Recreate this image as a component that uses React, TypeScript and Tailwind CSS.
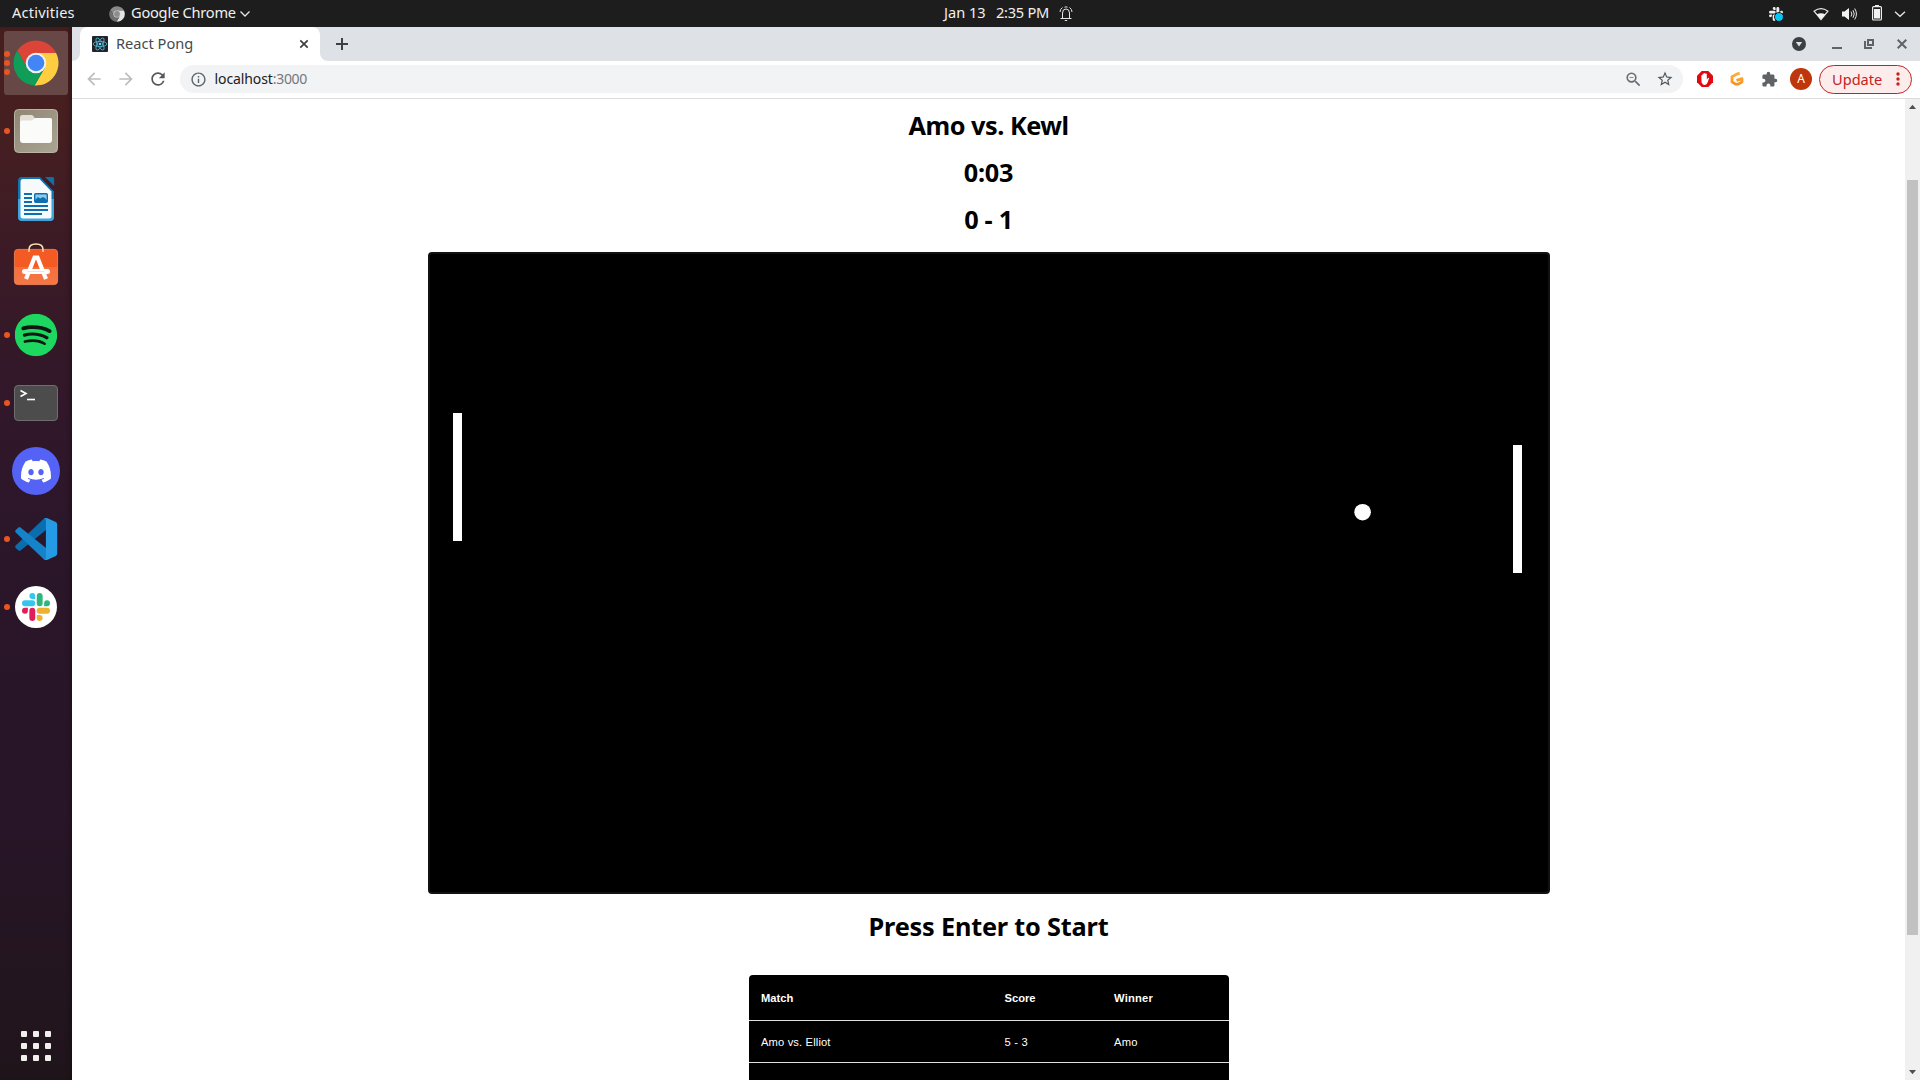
import type { ReactNode } from "react";
import { SiSpotify, SiDiscord } from "react-icons/si";
import {
  MdArrowBack,
  MdArrowForward,
  MdRefresh,
  MdInfoOutline,
  MdZoomOut,
  MdStarBorder,
  MdExtension,
} from "react-icons/md";

function ChromeLogo({ grey = false, className }: { grey?: boolean; className: string }) {
  const c = grey ? ["#8a8a8a", "#e4e4e4", "#6f6f6f", "#d6d6d6", "#8d8d8d"] : ["#db4437", "#ffcd40", "#0f9d58", "#f1f1f1", "#4285f4"];
  return (
    <svg viewBox="13 11 46 46" className={className}>
      <path d="M17.3 21.6A22.5 22.5 0 0 1 56.1 24H36L27.3 39Z" fill={c[0]} />
      <path d="M56.1 24A22.5 22.5 0 0 1 34.6 56.5L44.7 39L36 24Z" fill={c[1]} />
      <path d="M34.6 56.5A22.5 22.5 0 0 1 17.3 21.6L27.3 39H44.7Z" fill={c[2]} />
      <circle cx="36" cy="34" r="10.3" fill={c[3]} />
      <circle cx="36" cy="34" r="8.3" fill={c[4]} />
    </svg>
  );
}

const slackPaths = [
  "M5.042 15.165a2.528 2.528 0 0 1-2.52 2.523A2.528 2.528 0 0 1 0 15.165a2.527 2.527 0 0 1 2.522-2.52h2.52v2.52zM6.313 15.165a2.527 2.527 0 0 1 2.521-2.52 2.527 2.527 0 0 1 2.521 2.52v6.313A2.528 2.528 0 0 1 8.834 24a2.528 2.528 0 0 1-2.521-2.522v-6.313z",
  "M8.834 5.042a2.528 2.528 0 0 1-2.521-2.52A2.528 2.528 0 0 1 8.834 0a2.528 2.528 0 0 1 2.521 2.522v2.52H8.834zM8.834 6.313a2.528 2.528 0 0 1 2.521 2.521 2.528 2.528 0 0 1-2.521 2.521H2.522A2.528 2.528 0 0 1 0 8.834a2.528 2.528 0 0 1 2.522-2.521h6.312z",
  "M18.956 8.834a2.528 2.528 0 0 1 2.522-2.521A2.528 2.528 0 0 1 24 8.834a2.528 2.528 0 0 1-2.522 2.521h-2.522V8.834zM17.688 8.834a2.528 2.528 0 0 1-2.523 2.521 2.527 2.527 0 0 1-2.52-2.521V2.522A2.527 2.527 0 0 1 15.165 0a2.528 2.528 0 0 1 2.523 2.522v6.312z",
  "M15.165 18.956a2.528 2.528 0 0 1 2.523 2.522A2.528 2.528 0 0 1 15.165 24a2.527 2.527 0 0 1-2.52-2.522v-2.522h2.52zM15.165 17.688a2.527 2.527 0 0 1-2.52-2.523 2.526 2.526 0 0 1 2.52-2.52h6.313A2.527 2.527 0 0 1 24 15.165a2.528 2.528 0 0 1-2.522 2.523h-6.313z",
];

function SlackLogo({ colors, className }: { colors: string[]; className: string }) {
  return (
    <svg viewBox="0 0 24 24" className={className}>
      {slackPaths.map((d, i) => (
        <path key={d} d={d} fill={colors[i]} />
      ))}
    </svg>
  );
}

function FilesIcon() {
  return (
    <svg viewBox="0 0 72 68" className="h-[68px] w-[72px]">
      <defs>
        <linearGradient id="files" x1="0" y1="0" x2="1" y2="1">
          <stop offset="0" stopColor="#8f8672" />
          <stop offset="1" stopColor="#aaa594" />
        </linearGradient>
      </defs>
      <rect x="14.500" y="12.500" width="43" height="43" rx="4" fill="url(#files)" stroke="#b9b4a4" />
      <path d="M20 22.500q0-2.500 2.500-2.500h9q1.500 0 2.300 1.500l.9 1.800H50q2 0 2 2V40H20Z" fill="#e3dfd6" transform="translate(0 -2)" />
      <path d="M20 25q0-1.500 1.500-1.500H31q1.500 0 2.300-1l1-1Q35 21 36.500 21H50q2 0 2 2V43q0 3-3 3H23q-3 0-3-3Z" fill="#fbfbfa" />
    </svg>
  );
}

function WriterIcon() {
  return (
    <svg viewBox="0 0 72 68" className="h-[68px] w-[72px]">
      <path d="M22 12H40L54 26.500V52q0 4-4 4H22q-4 0-4-4V16q0-4 4-4Z" fill="#0e74b0" />
      <path d="M18 34H54V52q0 4-4 4H22q-4 0-4-4Z" fill="#3fa4da" />
      <path d="M23 14H39.500L51.500 26.500V51q0 2.500-2.500 2.500H23q-2.500 0-2.500-2.500V16.500Q20.500 14 23 14Z" fill="#f7fafc" />
      <path d="M45 12H52.500q1.700 0 1.700 1.700V21Z" fill="#0e70aa" />
      <g fill="#0b6fb0">
        <rect x="24" y="28" width="8" height="2" />
        <rect x="24" y="32" width="8" height="2" />
        <rect x="24" y="36" width="8" height="2" />
        <rect x="24" y="40" width="24" height="2" />
        <rect x="24" y="44" width="24" height="2" />
        <rect x="24" y="48" width="18" height="2" />
      </g>
      <rect x="34.700" y="28.700" width="12.600" height="8.600" rx="1" fill="#8dcbec" stroke="#0b6fb0" strokeWidth="1.400" />
      <path d="M35 37V35l3-3 2 1.500 3-1.500 2 1 2 2.500V37Z" fill="#0b6fb0" />
    </svg>
  );
}

function SoftwareIcon() {
  return (
    <svg viewBox="0 0 72 68" className="h-[68px] w-[72px]">
      <defs>
        <linearGradient id="soft" x1="0" y1="0" x2="0" y2="1">
          <stop offset="0.5" stopColor="#f35a24" />
          <stop offset="0.51" stopColor="#f56f3c" />
          <stop offset="1" stopColor="#f47845" />
        </linearGradient>
      </defs>
      <rect x="14.400" y="16.400" width="43.200" height="35.200" rx="3.500" fill="url(#soft)" stroke="#f58a5b" strokeWidth="0.800" />
      <path d="M29 19V16.500C29 12.500 32 11 36 11s7 1.500 7 5.500V19" fill="none" stroke="#fbe3b0" strokeWidth="1.500" />
      <path d="M26 46L34.500 24.500h3L46 46" fill="none" stroke="#fff" strokeWidth="4.200" />
      <rect x="22" y="36" width="28" height="5" rx="2.500" fill="#fff" />
      <path d="M27.500 38.500h17" stroke="#fbd3c2" strokeWidth="0.700" />
    </svg>
  );
}

function TerminalIcon() {
  return (
    <svg viewBox="0 0 72 68" className="h-[68px] w-[72px]">
      <rect x="14.500" y="16.500" width="43" height="35" rx="3.500" fill="#4c4c4c" stroke="#6e6e6e" />
      <path d="M20.500 21.500L26 24.500L20.500 27.500" fill="none" stroke="#fff" strokeWidth="1.600" />
      <path d="M27 30.500h8" stroke="#fff" strokeWidth="1.600" />
    </svg>
  );
}

function CodeIcon() {
  return (
    <svg viewBox="0 0 72 68" className="h-[68px] w-[72px]">
      <path d="M46 13V25L20.500 45.500q-1 .8-2 0L15.700 43q-1.200-1.200 0-2.400L43.500 14Q44.500 13 46 13Z" fill="#0b6dad" />
      <path d="M46 55V43L20.500 22.500q-1-.8-2 0L15.700 25q-1.200 1.200 0 2.400L43.500 54Q44.500 55 46 55Z" fill="#1583c9" />
      <path d="M43.500 14Q45 12.500 47.500 13.300L55.800 17q1.400.7 1.400 2.200V48.800q0 1.500-1.400 2.200L47.500 54.800Q45 55.500 43.500 54q2.300 1.300 2.400-1.700V15.700Q45.800 12.700 43.500 14Z" fill="#269be5" />
    </svg>
  );
}

const dockItems: { name: string; dots: number; icon: ReactNode }[] = [
  {
    name: "chrome",
    dots: 3,
    icon: (
      <span className="flex h-16 w-16 items-center justify-center rounded-[3px] bg-[#684846]">
        <ChromeLogo className="h-[46px] w-[46px]" />
      </span>
    ),
  },
  { name: "files", dots: 1, icon: <FilesIcon /> },
  { name: "writer", dots: 0, icon: <WriterIcon /> },
  { name: "software", dots: 0, icon: <SoftwareIcon /> },
  {
    name: "spotify",
    dots: 1,
    icon: (
      <span className="rounded-full bg-[#101712] text-[42px] text-[#1ed760]">
        <SiSpotify className="scale-[1.01]" />
      </span>
    ),
  },
  { name: "terminal", dots: 1, icon: <TerminalIcon /> },
  {
    name: "discord",
    dots: 0,
    icon: (
      <span className="flex h-12 w-12 items-center justify-center rounded-full bg-[#5562f6] text-[30px] text-white">
        <SiDiscord />
      </span>
    ),
  },
  { name: "code", dots: 1, icon: <CodeIcon /> },
  {
    name: "slack",
    dots: 1,
    icon: (
      <span className="flex h-[42px] w-[42px] items-center justify-center rounded-full bg-white">
        <SlackLogo colors={["#e01e5a", "#36c5f0", "#2eb67d", "#ecb22e"]} className="h-7 w-7" />
      </span>
    ),
  },
];

function Dock() {
  return (
    <aside className="flex w-[72px] shrink-0 flex-col justify-between bg-[linear-gradient(to_bottom,#451e1e_0%,#471f20_8%,#3d1b25_20%,#331829_32%,#2b1629_50%,#281528_75%,#22151e_94%,#20141b_100%)] pt-0.5 pb-[19px] shadow-[inset_-4px_0_5px_-3px_rgba(0,0,0,0.45)]">
      <div className="flex flex-col">
        {dockItems.map((item) => (
          <div key={item.name} className="relative flex h-[68px] items-center justify-center">
            <div className="absolute inset-y-0 left-1 z-10 flex flex-col items-center justify-center gap-[3px]">
              {Array.from({ length: item.dots }, (_, i) => (
                <span key={i} className="h-1.5 w-1.5 rounded-full bg-[#e95420]" />
              ))}
            </div>
            {item.icon}
          </div>
        ))}
      </div>
      <div className="ml-[21px] grid w-[30px] grid-cols-3 gap-1.5">
        {Array.from({ length: 9 }, (_, i) => (
          <span key={i} className="h-1.5 w-1.5 rounded-[1px] bg-[#f0efeb]" />
        ))}
      </div>
    </aside>
  );
}

function TopBar() {
  return (
    <header className="flex h-[27px] shrink-0 items-center bg-[#1d1d1d] text-[14.6px] leading-[25px] whitespace-nowrap text-[#f0f0f0]">
      <span className="mb-0.5 ml-3 w-[97px] tracking-[0.2px]">Activities</span>
      <ChromeLogo grey className="h-4 w-4" />
      <span className="mb-0.5 ml-1.5 w-[108px] tracking-[-0.22px]">Google Chrome</span>
      <svg viewBox="0 0 12 12" className="h-3 w-3" fill="none" stroke="#e6e6e6" strokeWidth="1.300">
        <path d="M1.500 3.500L6 8L10.500 3.500" />
      </svg>
      <span className="mb-0.5 ml-[693px] w-[52px]">Jan 13</span>
      <span className="mb-0.5 w-[63px] tracking-[-0.25px]">2:35 PM</span>
      <svg viewBox="0 0 14 16" className="h-4 w-3.5" fill="none" stroke="#e6e6e6" strokeWidth="1">
        <path d="M2.500 12.500h9M3.500 12.500V7Q3.500 3 7 3t3.500 4v5.500M1.500 12.500h1.500M11 12.500h1.500M5.800 14.500h2.400" />
        <path d="M3.500 1.500Q1 3 1 6M10.500 1.500Q13 3 13 6M5.500 1.200q1.500-.7 3 0" />
      </svg>
      <div className="relative ml-[696px] h-3.5 w-3.5">
        <SlackLogo colors={["#eee", "#eee", "#eee", "#eee"]} className="h-3.5 w-3.5" />
        <span className="absolute top-[6px] left-[6px] h-2 w-2 rounded-full bg-[#00c8f8] outline outline-[#1d1d1d]" />
      </div>
      <svg viewBox="0 0 16 14" className="ml-[30px] h-3.5 w-4">
        <path d="M1 4.200Q8-1 15 4.200L8 12.500Z" fill="none" stroke="#e8e8e8" strokeWidth="1.200" />
        <path d="M3.800 7.300Q8 5 12.200 7.300L8 12.500Z" fill="#f2f2f2" />
      </svg>
      <svg viewBox="0 0 16 14" className="ml-[13px] h-3.5 w-4" fill="none" stroke="#e8e8e8">
        <path d="M0 4.500H2.500L7 1V13L2.500 9.500H0Z" fill="#f2f2f2" stroke="none" />
        <path d="M9 4.500Q10.800 7 9 9.500M11 3.200Q13.500 7 11 10.800M12.700 1.500Q16.200 7 12.700 12.500" strokeWidth="1" />
      </svg>
      <svg viewBox="0 0 10 16" className="mb-0.5 ml-[14px] h-4 w-2.5">
        <rect x="3" y="0" width="4" height="2" fill="#eee" />
        <rect x="0.600" y="1.600" width="8.800" height="13.400" rx="1" fill="none" stroke="#eee" strokeWidth="1.200" />
        <rect x="2" y="4" width="6" height="9.500" fill="#f2f2f2" />
      </svg>
      <svg viewBox="0 0 12 12" className="ml-3 h-3 w-3" fill="none" stroke="#e6e6e6" strokeWidth="1.300">
        <path d="M1 3.800L6 8.300L11 3.800" />
      </svg>
    </header>
  );
}

function TabStrip() {
  return (
    <div className="flex h-[34px] items-end bg-[#dee1e6]">
      <svg viewBox="0 0 8 8" className="h-2 w-2">
        <path d="M8 0A8 8 0 0 1 0 8H8Z" fill="#fff" />
      </svg>
      <div className="flex h-[34px] w-60 items-center rounded-t-lg bg-white pl-3">
        <svg viewBox="0 0 16 16" className="h-4 w-4" fill="none" stroke="#55b9d6" strokeWidth="0.800">
          <rect width="16" height="16" rx="1" fill="#20232a" stroke="none" />
          <ellipse cx="8" cy="8" rx="6.800" ry="2.600" />
          <ellipse cx="8" cy="8" rx="6.800" ry="2.600" transform="rotate(60 8 8)" />
          <ellipse cx="8" cy="8" rx="6.800" ry="2.600" transform="rotate(120 8 8)" />
          <circle cx="8" cy="8" r="1.300" fill="#61dafb" stroke="none" />
        </svg>
        <span className="mb-0.5 ml-2 w-[181px] text-[14.6px] leading-5 text-[#45494d]">React Pong</span>
        <svg viewBox="0 0 14 14" className="h-3.5 w-3.5" stroke="#3c4043" strokeWidth="1.700">
          <path d="M3.300 3.300L10.700 10.700M10.700 3.300L3.300 10.700" />
        </svg>
      </div>
      <svg viewBox="0 0 8 8" className="h-2 w-2">
        <path d="M0 0A8 8 0 0 0 8 8H0Z" fill="#fff" />
      </svg>
      <div className="flex h-full flex-1 items-center">
        <svg viewBox="0 0 12 12" className="ml-2 h-3 w-3" stroke="#3c4043" strokeWidth="2">
          <path d="M6 0V12M0 6H12" />
        </svg>
        <svg viewBox="0 0 14 14" className="ml-auto h-3.5 w-3.5">
          <circle cx="7" cy="7" r="7" fill="#3c4043" />
          <path d="M3.800 5H10.200L7 9.500Z" fill="#dee1e6" />
        </svg>
        <svg viewBox="0 0 10 14" className="ml-[26px] h-3.5 w-2.5">
          <rect y="10" width="10" height="2" fill="#5f6368" />
        </svg>
        <svg viewBox="0 0 10 10" className="ml-[22px] h-2.5 w-2.5" fill="none" stroke="#5f6368">
          <path d="M4 1H9V6H4Z" strokeWidth="2" />
          <path d="M1 2V9H8" strokeWidth="2" />
        </svg>
        <svg viewBox="0 0 10 10" className="mr-[13px] ml-[23px] h-2.5 w-2.5" stroke="#5f6368" strokeWidth="2">
          <path d="M.7.7L9.300 9.300M9.300.7L.7 9.300" />
        </svg>
      </div>
    </div>
  );
}

function Toolbar() {
  return (
    <div className="flex h-[38px] items-center border-b border-[#d9dbde] bg-white pb-px">
      <MdArrowBack className="ml-3 h-[20px] w-[20px] text-[#bbbdbf]" />
      <MdArrowForward className="ml-3 h-[20px] w-[20px] text-[#bbbdbf]" />
      <MdRefresh className="ml-3 h-[20px] w-[20px] text-[#54585d]" />
      <div className="ml-3 flex h-7 w-[1503px] items-center rounded-full bg-[#f1f3f4] pl-[9.500px] text-[14px] leading-7">
        <MdInfoOutline className="h-[17px] w-[17px] text-[#5f6368]" />
        <span className="ml-2 tracking-[-0.1px] text-[#202124]">localhost</span>
        <span className="tracking-[-0.3px] text-[#74787c]">:3000</span>
        <MdZoomOut className="ml-auto h-[19px] w-[19px] text-[#6a6e73]" />
        <MdStarBorder className="mr-[9px] ml-[13px] h-[18px] w-[18px] text-[#54585d]" />
      </div>
      <svg viewBox="0 0 16 16" className="ml-3.5 h-4 w-4">
        <path d="M4.700 0H11.300L16 4.700V11.300L11.300 16H4.700L0 11.300V4.700Z" fill="#e20a12" />
        <path
          d="M4.400 8V4.600q0-.7.6-.7t.6.7V3.300q0-.7.7-.7t.7.7V2.700q0-.7.7-.7t.7.7V3.300q0-.7.7-.7t.7.7V8.500l1-1.300q.6-.7 1.300-.1L10.800 11Q9.800 14 8 14 5.500 14 4.600 11.500Z"
          fill="#fff"
        />
      </svg>
      <svg viewBox="0 0 14 14" className="ml-[17px] h-3.5 w-3.5" fill="none" strokeWidth="2.800" strokeLinejoin="round">
        <defs>
          <linearGradient id="g" x1="0" y1="0" x2="0" y2="1">
            <stop offset="0" stopColor="#fbb03b" />
            <stop offset="1" stopColor="#f7931e" />
          </linearGradient>
        </defs>
        <path d="M9.800 1.600L7.500 1.700L2 4.700V9.800L5.500 12.200H8.300L12 9.800V6.600L6.500 8.300" stroke="url(#g)" />
      </svg>
      <MdExtension className="ml-[17px] h-[17px] w-[17px] text-[#5f6368]" />
      <span className="ml-3 flex h-[22px] w-[22px] items-center justify-center rounded-full bg-[#bf360c] text-[12px] leading-[22px] text-white">A</span>
      <div className="ml-[7px] flex h-[29px] w-[93px] items-center rounded-full border border-[#c5221f] bg-[#fcecec] pl-3 text-[#c5221f]">
        <span className="w-16 text-[14.6px] leading-[27px]">Update</span>
        <svg viewBox="0 0 4 14" className="h-3.5 w-1" fill="#c5221f">
          <circle cx="2" cy="2" r="1.700" />
          <circle cx="2" cy="7" r="1.700" />
          <circle cx="2" cy="12" r="1.700" />
        </svg>
      </div>
    </div>
  );
}

function GameBoard() {
  return (
    <div className="relative mt-[9px] h-[642px] w-[1122px] rounded-[4px] border-2 border-[#111] bg-black">
      <span className="absolute top-[159px] left-[23px] h-32 w-[9.300px] bg-white" />
      <span className="absolute top-[191px] left-[1083px] h-32 w-[9.300px] bg-white" />
      <svg viewBox="0 0 18 18" className="absolute top-[249px] left-[924px] h-[18px] w-[18px]">
        <circle cx="8.600" cy="9.200" r="8.300" fill="#fff" />
      </svg>
    </div>
  );
}

function ResultsTable() {
  return (
    <div className="mt-[25px] w-[480px] rounded-t-[4px] bg-black font-['Liberation_Sans',sans-serif] text-[11.200px] leading-4 text-white">
      <div className="grid h-[46px] grid-cols-[243.500px_109.500px_1fr] items-center border-b border-[#e0e0e0] pl-[12.500px] font-bold">
        <span>Match</span>
        <span>Score</span>
        <span className="tracking-[0.2px]">Winner</span>
      </div>
      <div className="grid h-[42px] grid-cols-[243.500px_109.500px_1fr] items-center border-b border-[#e0e0e0] pl-[12.500px]">
        <span className="tracking-[0.13px]">Amo vs. Elliot</span>
        <span className="tracking-[0.2px]">5 - 3</span>
        <span className="tracking-[0.2px]">Amo</span>
      </div>
      <div className="h-[42px]" />
    </div>
  );
}

function Scrollbar() {
  return (
    <div className="flex w-[15px] shrink-0 flex-col items-center bg-[#f0f0f0]">
      <svg viewBox="0 0 15 15" className="h-[15px] w-[15px]">
        <path d="M7.500 5.800L11 10H4Z" fill="#505050" />
      </svg>
      <div className="mt-[66px] h-[755px] w-[11px] bg-[#c1c1c1]" />
      <svg viewBox="0 0 15 15" className="mt-auto h-[15px] w-[15px]">
        <path d="M4 5H11L7.500 9.200Z" fill="#505050" />
      </svg>
    </div>
  );
}

export default function App() {
  return (
    <div className="flex h-[1080px] w-[1920px] flex-col overflow-hidden bg-white font-['Noto_Sans',sans-serif]">
      <TopBar />
      <div className="flex min-h-0 flex-1">
        <Dock />
        <div className="flex min-w-0 flex-1 flex-col">
          <TabStrip />
          <Toolbar />
          <div className="flex min-h-0 flex-1">
            <main className="flex min-w-0 flex-1 flex-col items-center overflow-hidden pt-[3px] text-[25.300px] leading-[47px] font-bold text-black [&>*]:shrink-0">
              <h2 className="tracking-[-0.5px]">Amo vs. Kewl</h2>
              <h2 className="tracking-[-0.3px]">0:03</h2>
              <h2 className="tracking-[-0.3px]">0 - 1</h2>
              <GameBoard />
              <h2 className="mt-[9px] tracking-[-0.2px]">Press Enter to Start</h2>
              <div className="font-normal">
                <ResultsTable />
              </div>
            </main>
            <Scrollbar />
          </div>
        </div>
      </div>
    </div>
  );
}
